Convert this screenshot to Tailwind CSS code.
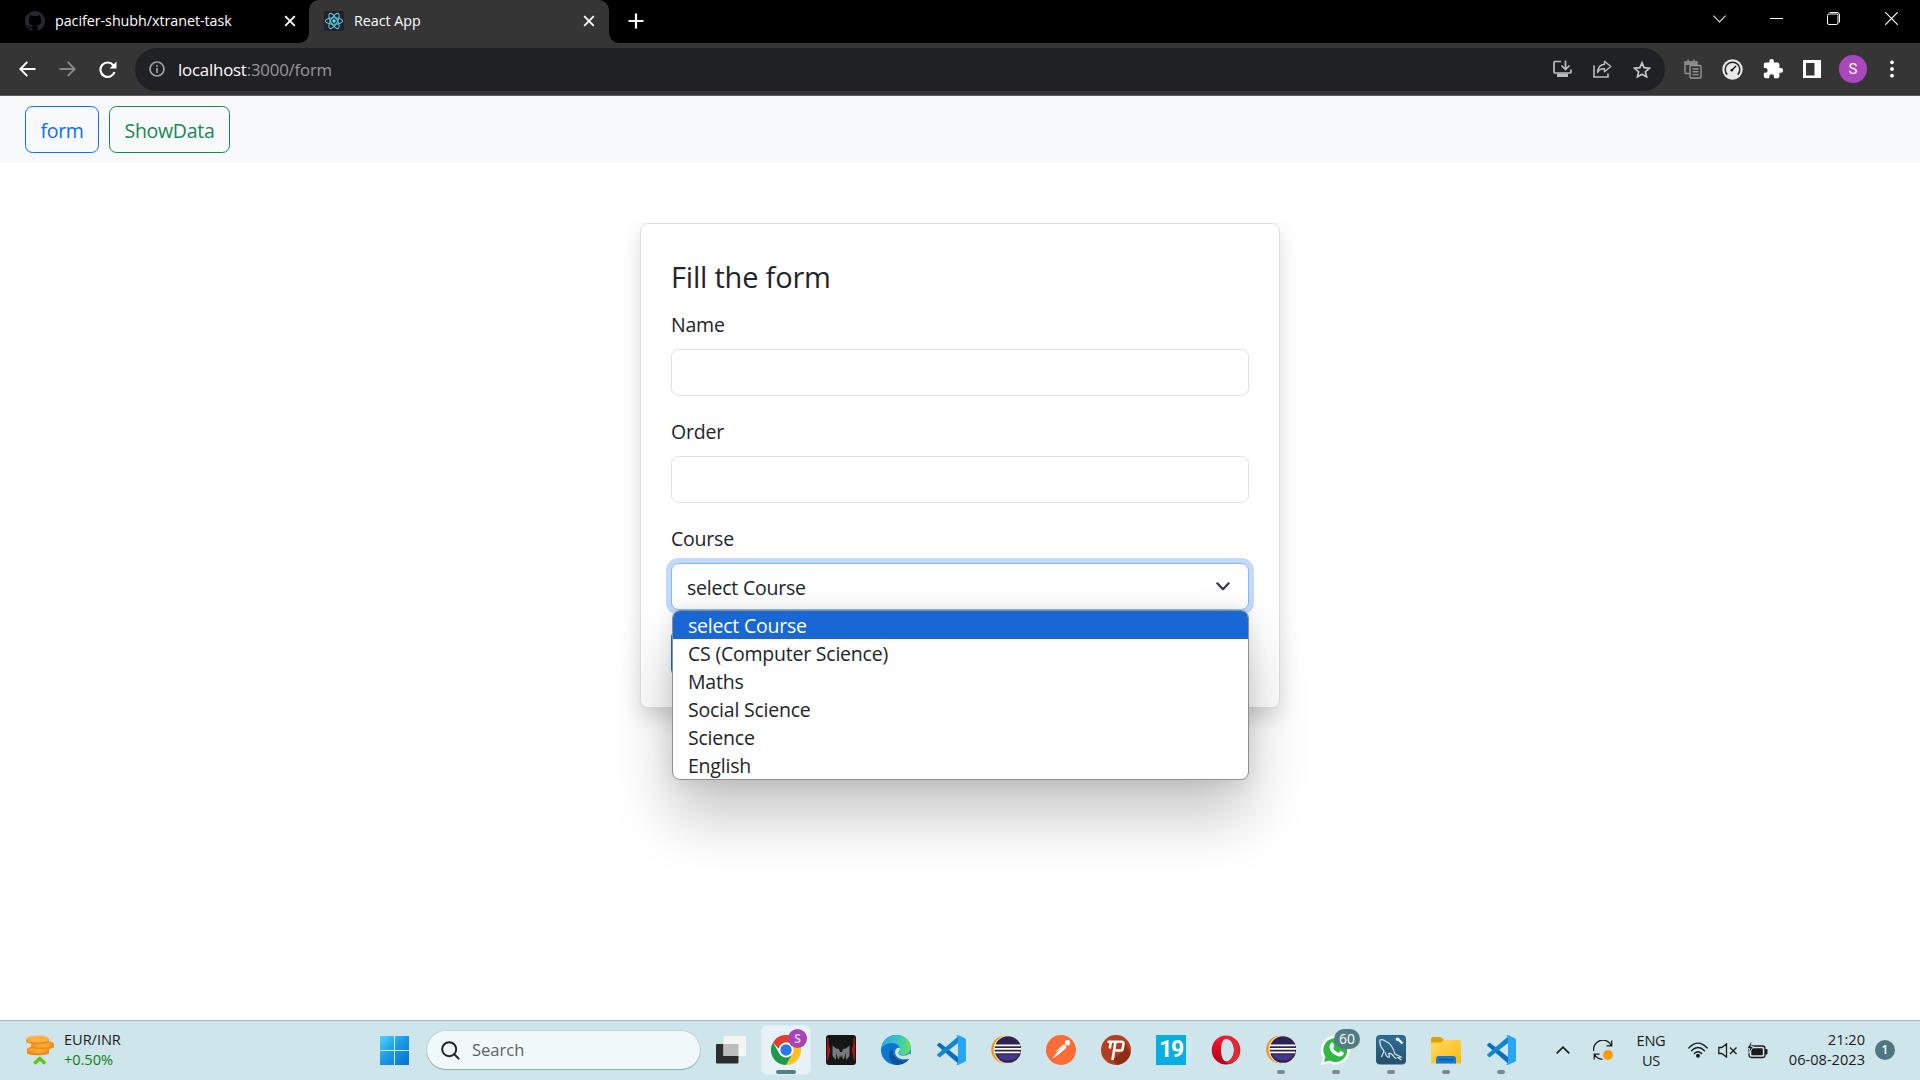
<!DOCTYPE html>
<html lang="en">
<head>
<meta charset="utf-8">
<title>React App</title>
<script src="https://cdn.jsdelivr.net/npm/@tailwindcss/browser@4"></script>
</head>
<body class="w-[1920px] h-[1080px] overflow-hidden flex flex-col bg-white font-['Open_Sans','Noto_Sans',sans-serif] text-[#212529]">

<!-- Shared app icons -->
<svg class="absolute size-0">
  <defs>
    <linearGradient id="win" x1="0" y1="0" x2="1" y2="1"><stop offset="0" stop-color="#4cd3fd"/><stop offset=".5" stop-color="#1a97e3"/><stop offset="1" stop-color="#0070d2"/></linearGradient>
    <linearGradient id="coin" x1="0" x2="1"><stop offset="0" stop-color="#f6931d"/><stop offset=".6" stop-color="#fdab3c"/><stop offset="1" stop-color="#f08c13"/></linearGradient>
    <linearGradient id="edgeTop" x1="0" y1=".5" x2="1" y2=".6"><stop offset="0" stop-color="#2fa9e0"/><stop offset=".5" stop-color="#35c4c8"/><stop offset="1" stop-color="#66e35b"/></linearGradient>
    <linearGradient id="fold" x1="0" y1="0" x2="1" y2="1"><stop offset="0" stop-color="#ffdc60"/><stop offset="1" stop-color="#fcb912"/></linearGradient>
    <linearGradient id="opera" x1="0" y1="0" x2="0" y2="1"><stop offset="0" stop-color="#ff1b2d"/><stop offset="1" stop-color="#a70014"/></linearGradient>
    <linearGradient id="sql" x1="0" y1="0" x2="0" y2="1"><stop offset="0" stop-color="#2d6f9b"/><stop offset="1" stop-color="#265069"/></linearGradient>
    <symbol id="vscode" viewBox="0 0 30 30">
      <path d="M0.8 10.2 2.6 8.2Q3.4 7.6 4.2 8.1L22 22v6.5Z" fill="#0a6fb8"/>
      <path d="M0.8 19.8 2.6 21.8Q3.4 22.4 4.2 21.9L22 8V1.5Z" fill="#0f86d4"/>
      <path d="M22 0l7 3.2q1 .5 1 1.6v20.4q0 1.100-1 1.600L22 30q-1 .2-1.600-.6l1.600-1.400V2L20.400.6Q21-.2 22 0Z" fill="#2aa5f3"/>
    </symbol>
    <symbol id="eclipse" viewBox="0 0 30 30">
      <circle cx="14" cy="14.500" r="13.800" fill="#f7941e"/>
      <circle cx="16.500" cy="14.500" r="14" fill="#f7dfb6"/>
      <circle cx="17" cy="14.500" r="13.300" fill="#2c2255"/>
      <path d="M6 19.500h22q-3 6-11 6t-11-6Z" fill="#43388a"/>
      <path d="M3.500 10.300h26M3.300 13.800h26.700M3.500 17.300h26" stroke="#fff" stroke-width="1.700"/>
    </symbol>
  </defs>
</svg>

<!-- Tab strip -->
<header class="h-[43px] shrink-0 bg-black flex text-white text-[14.300px] tracking-[-0.04px]">
  <div class="w-[309px] flex items-center pl-[25px] pr-[13px] pb-px">
    <svg class="size-5 shrink-0" viewBox="0 0 16 16" fill="#24292e"><path d="M8 0C3.580 0 0 3.580 0 8c0 3.540 2.290 6.530 5.470 7.590.4.070.550-.17.550-.38 0-.19-.010-.82-.010-1.490-2.010.37-2.530-.49-2.690-.94-.09-.23-.48-.94-.82-1.130-.28-.15-.68-.52-.010-.53.630-.010 1.080.58 1.230.82.72 1.210 1.870.87 2.330.66.070-.52.280-.87.510-1.070-1.780-.2-3.640-.89-3.640-3.950 0-.87.310-1.590.82-2.150-.08-.2-.36-1.020.08-2.120 0 0 .67-.21 2.200.82a7.400 7.400 0 0 1 4 0c1.530-1.040 2.200-.82 2.200-.82.44 1.100.16 1.920.08 2.120.51.56.82 1.270.82 2.150 0 3.070-1.870 3.750-3.650 3.950.29.25.54.73.54 1.480 0 1.070-.010 1.930-.010 2.200 0 .21.150.46.550.38A8 8 0 0 0 16 8c0-4.420-3.580-8-8-8Z"/></svg>
    <span class="ml-[10px] pb-px whitespace-nowrap">pacifer-shubh/xtranet-task</span>
    <svg class="ml-auto size-3" viewBox="0 0 12 12" stroke="#fff" stroke-width="1.900"><path d="M1.200 1.200l9.600 9.600M10.800 1.200L1.200 10.800"/></svg>
  </div>
  <div class="relative w-[300px] bg-[#353535] rounded-t-[10px] flex items-center pl-[15px] pr-[14px] pb-px">
    <svg class="absolute -left-[10px] bottom-0 size-[10px]" viewBox="0 0 10 10" fill="#353535"><path d="M10 0v10H0A10 10 0 0 0 10 0Z"/></svg>
    <svg class="absolute -right-[10px] bottom-0 size-[10px]" viewBox="0 0 10 10" fill="#353535"><path d="M0 0v10h10A10 10 0 0 1 0 0Z"/></svg>
    <svg class="size-5 shrink-0" viewBox="0 0 20 20"><rect width="20" height="20" rx="1.500" fill="#20232a"/><g fill="none" stroke="#5fc5dc" stroke-width="1.100"><ellipse cx="10" cy="10" rx="8.600" ry="3.300"/><ellipse cx="10" cy="10" rx="8.600" ry="3.300" transform="rotate(60 10 10)"/><ellipse cx="10" cy="10" rx="8.600" ry="3.300" transform="rotate(120 10 10)"/></g><circle cx="10" cy="10" r="1.700" fill="#61dafb"/></svg>
    <span class="ml-[10px] pb-px whitespace-nowrap">React App</span>
    <svg class="ml-auto size-3" viewBox="0 0 12 12" stroke="#fff" stroke-width="1.800"><path d="M1.200 1.200l9.600 9.600M10.800 1.200L1.200 10.800"/></svg>
  </div>
  <div class="flex items-center pl-[19px] pb-px">
    <svg class="size-4" viewBox="0 0 16 16" stroke="#fff" stroke-width="2.200"><path d="M8 .5v15M.5 8h15"/></svg>
  </div>
  <div class="ml-auto flex items-center pr-[22px] pb-[6px]">
    <svg class="w-[13px] h-[8px]" viewBox="0 0 13 8" fill="none" stroke="#ddd" stroke-width="1.100"><path d="M.4.600 6.500 7 12.600.600"/></svg>
    <svg class="ml-[44px] w-[13px] h-px" viewBox="0 0 13 1" fill="#fff"><path d="M0 0h13v1H0z"/></svg>
    <svg class="ml-[44px] size-[13px]" viewBox="0 0 13 13" fill="none" stroke="#fff" stroke-width="1"><rect x=".5" y="2" width="10.500" height="10.500" rx="1.500"/><path d="M2.500.500H10q2.500 0 2.500 2.500v7.500"/></svg>
    <svg class="ml-[45px] size-[13px]" viewBox="0 0 13 13" stroke="#fff" stroke-width="1.200"><path d="M.3.300l12.400 12.400M12.700.300.300 12.700"/></svg>
  </div>
</header>

<!-- Toolbar -->
<div class="h-[53px] shrink-0 bg-[#353535] border-b border-[#5c5c5c] flex items-center pl-[19px] pr-[25px]">
  <svg class="w-[17px] h-4" viewBox="0 0 17 16" fill="none" stroke="#fff" stroke-width="2"><path d="M16.500 8H1.500M8.300.900 1.300 8l7 7.100"/></svg>
  <svg class="ml-[23px] w-[17px] h-4" viewBox="0 0 17 16" fill="none" stroke="#868686" stroke-width="2"><path d="M.5 8h15M8.700.900l7 7.100-7 7.100"/></svg>
  <svg class="ml-[23px] w-[18px] h-[17px]" viewBox="0 0 18 17" fill="none" stroke="#fff" stroke-width="2.200"><path d="M14.300 4.200A7.200 7.200 0 1 0 15.500 11"/><path d="M17.500.500v7h-7Z" fill="#fff" stroke="none"/></svg>
  <div class="ml-[18px] w-[1530px] h-[43px] rounded-full bg-[#202124] flex items-center pl-[14px] pr-[14px]">
    <svg class="size-4" viewBox="0 0 16 16" fill="none" stroke="#9aa0a6" stroke-width="1.700"><circle cx="8" cy="8" r="7"/><path d="M8 7v5M8 4v1.800"/></svg>
    <p class="ml-[13px] pt-px text-[16.800px] tracking-[-0.18px] text-[#989898]"><span class="text-white">localhost</span>:3000/form</p>
    <div class="ml-auto flex items-center gap-[21px]">
      <svg class="w-[19px] h-[18px]" viewBox="0 0 19 18" fill="none" stroke="#bcbcbc" stroke-width="1.700"><path d="M8 1.500H2Q1 1.500 1 2.500v9.500q0 1 1 1h15q1 0 1-1V9.500M12.500.500v8.500M8.500 5.500l4 4 4-4"/><path d="M4 13.500h11V17H4Z" fill="#bcbcbc" stroke="none"/></svg>
      <svg class="w-[19px] h-[18px]" viewBox="0 0 19 18" fill="none" stroke="#bcbcbc" stroke-width="1.600"><path d="M1 5.500v11.500h14V13.500"/><path d="M11.500 1.300l6.300 5.200-6.300 5.200V8.800Q6.500 8.500 4.500 12.500 5 5 11.500 4.300Z" stroke-linejoin="round" stroke-width="1.400"/></svg>
      <svg class="w-[18px] h-[17px]" viewBox="0 0 18 17" fill="none" stroke="#c8c8c8" stroke-width="1.700"><path d="M9 1.800l2.100 4.900 5.300.5-4 3.500 1.200 5.200L9 13.200l-4.600 2.700 1.200-5.200-4-3.500 5.300-.5Z"/></svg>
    </div>
  </div>
  <svg class="ml-[19px] w-[18px] h-5" viewBox="0 0 18 20" fill="none" stroke="#959595" stroke-width="1.400"><path d="M5.500 14.500H2q-1 0-1-1V3h12v3"/><path d="M1 2.500h12v3.500H1Z" fill="#8a8a8a" stroke="none"/><path d="M4 .5v2M10 .5v2"/><rect x="6" y="6.500" width="11" height="12.500" rx="1" fill="#353535"/><path d="M8.500 10h6M8.500 12.800h6M8.500 15.600h6"/></svg>
  <svg class="ml-[20px] size-[21px]" viewBox="0 0 21 21"><circle cx="10.500" cy="10.500" r="10.200" fill="#e8eae8"/><path d="M5.300 15.600A7.300 7.300 0 1 1 15.700 15.600" fill="none" stroke="#222" stroke-width="1.500"/><path d="M9.500 11.500l4.500-4.500" stroke="#111" stroke-width="1.500"/><circle cx="9.800" cy="11.200" r="1.300" fill="#111"/></svg>
  <svg class="ml-[19px] size-[22px]" viewBox="0 0 24 24" fill="#fff"><path d="M20.500 11H19V7c0-1.100-.9-2-2-2h-4V3.500a2.500 2.500 0 0 0-5 0V5H4c-1.100 0-2 .9-2 2v3.800h1.500a2.700 2.700 0 0 1 0 5.400H2V20c0 1.100.9 2 2 2h3.800v-1.500a2.700 2.700 0 0 1 5.400 0V22H17c1.100 0 2-.9 2-2v-4h1.500a2.500 2.500 0 0 0 0-5Z"/></svg>
  <svg class="ml-[19px] size-[18px]" viewBox="0 0 18 18"><path fill="#fff" fill-rule="evenodd" d="M0 0h18v18H0ZM3 3v12.500h8.500V3Z"/></svg>
  <div class="ml-[18px] size-7 rounded-full bg-[#ab47bc] text-white text-[15px] flex items-center justify-center font-['Roboto',sans-serif]">S</div>
  <svg class="ml-auto w-[6px] h-[18px]" viewBox="0 0 6 18" fill="#fff"><circle cx="3" cy="2.300" r="1.900"/><circle cx="3" cy="9" r="1.900"/><circle cx="3" cy="15.700" r="1.900"/></svg>
</div>

<!-- Page -->
<nav class="h-[67px] shrink-0 bg-[#f8f9fa] flex items-start gap-[10px] pt-[10px] pl-[25px] text-[19.500px] leading-[30px] tracking-[-0.3px] font-[370]">
  <a class="w-[74px] h-[47px] flex justify-center items-center pt-[2px] border border-[#0d6efd] text-[#0d6efd] rounded-[7.500px]">form</a>
  <a class="w-[121px] h-[47px] flex justify-center items-center pt-[2px] border border-[#198754] text-[#198754] rounded-[7.500px]">ShowData</a>
</nav>

<main class="flex-1 flex justify-center items-start pt-[60px] text-[19.500px] leading-[30px] tracking-[-0.22px] font-[370]">
  <form class="w-[640px] h-[485px] px-[30px] pt-[35px] bg-white border border-[#dfdfe0] rounded-[7.500px] shadow-[0_10px_20px_rgba(0,0,0,0.15)]">
    <h4 class="h-[51px] text-[29px] leading-[36px] tracking-[-0.2px]">Fill the form</h4>
    <label class="block">Name</label>
    <input class="block mt-[9px] w-[578px] h-[47px] border border-[#dee2e6] rounded-[7.500px]">
    <label class="block mt-[21px]">Order</label>
    <input class="block mt-[9px] w-[578px] h-[47px] border border-[#dee2e6] rounded-[7.500px]">
    <label class="block mt-[21px]">Course</label>
    <div class="relative mt-[9px] w-[578px] h-[47px] flex items-center justify-between pl-[15px] pr-[18px] bg-white border border-[#86b7fe] rounded-[7.500px] shadow-[0_0_0_5px_#c3daff]">
      <span class="pt-[2px]">select Course</span>
      <svg class="w-[14px] h-[9px]" viewBox="0 0 14 9" fill="none" stroke="#343a40" stroke-width="2.200" stroke-linecap="round" stroke-linejoin="round"><path d="M1.300 1.300 7 7.300l5.700-6"/></svg>
      <ul class="absolute z-10 left-0 top-[46px] w-[577px] h-[170px] bg-white border border-[#8f8f8f] rounded-[8px] overflow-hidden leading-[28px] shadow-[0_0_20px_rgba(0,0,0,0.1),0_36px_60px_rgba(0,0,0,0.23)]">
        <li class="pl-[15px] pt-px h-[28px] bg-[#1967d2] text-white">select Course</li>
        <li class="pl-[15px] pt-px h-[28px]">CS (Computer Science)</li>
        <li class="pl-[15px] pt-px h-[28px]">Maths</li>
        <li class="pl-[15px] pt-px h-[28px]">Social Science</li>
        <li class="pl-[15px] pt-px h-[28px]">Science</li>
        <li class="pl-[15px] pt-px h-[28px]">English</li>
      </ul>
    </div>
    <button type="button" class="block mt-5 w-[92px] h-[47px] rounded-[7.500px] bg-[#0d6efd]"></button>
  </form>
</main>

<!-- Taskbar -->
<footer class="relative z-20 h-[60px] shrink-0 bg-[#cee6eb] border-t border-[#a2b2b8] flex items-center pb-px text-[14.600px] leading-5 text-[#1b1b1b]">
  <svg class="ml-[26px] w-[28px] h-[30px]" viewBox="0 0 28 30"><path d="M1 14.500v3.500c0 3 22 3 22 0v-3.500Z" fill="#ee8a15"/><ellipse cx="12" cy="14.500" rx="11.500" ry="3.500" fill="url(#coin)"/><path d="M5 9v3c0 3 23 3 23 0V9Z" fill="#f08f1c"/><ellipse cx="16.500" cy="9" rx="11.500" ry="3.500" fill="url(#coin)"/><path d="M0 4v2.500c0 3.500 23 3.500 23 0V4Z" fill="#f08f1c"/><ellipse cx="11.500" cy="4" rx="11.500" ry="3.600" fill="#fdb044"/><path d="M9.500 27.500 13.800 23.500 18 27.500" fill="none" stroke="#63c41a" stroke-width="3.600" stroke-linejoin="round" stroke-linecap="round"/></svg>
  <div class="ml-[10px] w-[70px] pb-[2px] tracking-[-0.05px]"><p>EUR/INR</p><p class="text-[#0f7b0f]">+0.50%</p></div>
  <svg class="ml-[246px] size-[29px]" viewBox="0 0 29 29"><rect width="14" height="14" rx="1" fill="#3dbdf5"/><rect x="15" width="14" height="14" rx="1" fill="#1f9ae4"/><rect y="15" width="14" height="14" rx="1" fill="#1289dc"/><rect x="15" y="15" width="14" height="14" rx="1" fill="#047bd6"/><path d="M1 0h13v14H0V1q0-1 1-1ZM15 0h13q1 0 1 1v13H15ZM0 15h14v14H1q-1 0-1-1ZM15 15h14v13q0 1-1 1H15Z" fill="url(#win)"/></svg>
  <div class="ml-[18px] w-[273px] h-[38px] rounded-full bg-[#f0f8fa] shadow-[0_1px_1px_#93a9b0,0_0_0_1px_#c0d8dd] flex items-center pl-[14px] text-[16.500px] text-[#5d6366]">
    <svg class="size-[19px]" viewBox="0 0 19 19" fill="none" stroke="#222" stroke-width="2" stroke-linecap="round"><circle cx="8.200" cy="8.200" r="7"/><path d="M13.300 13.300l4.300 4.300"/></svg>
    <span class="ml-[12px]">Search</span>
  </div>
  <svg class="ml-[16px] w-[30px] h-[28px]" viewBox="0 0 30 28"><path d="M0 9q0-1 1-1h21.500v18.500q0 1-1 1H1q-1 0-1-1Z" fill="#2d2d2b"/><path d="M7.500 0H30v20H7.500Z" fill="#f5f5f5"/><path d="M7.500 8h15v12h-15Z" fill="#bdbdbd"/></svg>

  <div class="relative ml-[16px] w-12 h-12 rounded-[5px] bg-[#e6f2f7] shadow-[0_0_0_1px_#dcecf1] flex items-center justify-center">
    <svg class="size-[30px]" viewBox="0 0 30 30"><path d="M28 7.500A15 15 0 0 1 15 30L21.500 18.800 22 11 15 7.500Z" fill="#fcc31e"/><path d="M2 7.500A15 15 0 0 1 28 7.500H15Q10 8 8 14Z" fill="#e33b2e"/><path d="M15 30A15 15 0 0 1 2 7.500L8.500 18.800Q12 23 15 22l6.500-3.200Z" fill="#209a4a"/><circle cx="15" cy="15" r="7.500" fill="#fff"/><circle cx="15" cy="15" r="5.700" fill="#2b78ee"/></svg>
    <span class="absolute left-[26px] top-[3px] size-[19px] rounded-full bg-[#a743b8] text-[#efd3f2] text-[12px] leading-[19px] text-center font-semibold">S</span>
    <span class="absolute left-[14px] bottom-0 w-5 h-1 rounded-full bg-[#557f88]"></span>
  </div>
  <div class="ml-[16px] flex items-center gap-[25px]">
    <svg class="size-[30px]" viewBox="0 0 30 30"><rect width="30" height="30" rx="3" fill="#161616"/><path d="M1 3h1.500v6l1.700 6-2 9L1 27ZM29 3h-1.500v6l-1.700 6 2 9 1.200 3Z" fill="#b0141a"/><path d="M6.500 10.500 10 13.500l3 .5 1 3h2l1-3 3-.500 3.500-3V21l-3.500 4v-7l-2 6h-1l-1-4-1 3-1-3-1 4h-1l-2-6v7L6.500 21Z" fill="#77797d"/></svg>
    <svg class="size-[30px]" viewBox="0 0 30 30"><circle cx="15" cy="15" r="15" fill="#0c77cf"/><path d="M.1 14C1.500 5 8 0 15 0c9 0 15 6 15 12.500 0 5-4 7.500-7.500 7.500-3 0-5-1-5-2s1.500-1.500 1.500-4c0-3-3-6-8-6C6.500 8 2 10.500.1 14Z" fill="url(#edgeTop)"/><path d="M12 12c-2.500 6 2 13.500 9.500 13.500 3 0 4.500-.5 7-2C25.500 28 20.500 30 15.500 30 7 28 6 18 12 12Z" fill="#0d4f9e"/><path d="M19 13c0 3-1.600 3.200-1.600 5s2.200 2.600 5.200 2.600c2.500 0 4.500-.7 6.300-2.300l.4 4.500C22 26.500 14.500 23 14 17.500c0-3 2-5.300 5-4.500Z" fill="#cee6eb"/></svg>
    <svg class="size-[30px]"><use href="#vscode"/></svg>
    <svg class="size-[30px]"><use href="#eclipse"/></svg>
    <svg class="size-[30px]" viewBox="0 0 30 30"><circle cx="15" cy="15" r="15" fill="#ff6c37"/><path d="M7.500 22.500 12 17l6-6.500 2 2-6 5.500Z" fill="#fff" stroke="#fff" stroke-width="1" stroke-linejoin="round"/><path d="M10.500 16.500l6.500-6 3 .5" stroke="#fff" fill="none" stroke-width="1.200"/><circle cx="21.500" cy="7.800" r="2.700" fill="#fff"/></svg>
    <svg class="size-[30px]" viewBox="0 0 30 30"><circle cx="15" cy="15" r="15" fill="#b53d20"/><path d="M12 25 22 16l2-9 5.300 12A15 15 0 0 1 16 30Z" fill="#8f2d14"/><path d="M6.500 6.800H20.500q2.200 0 2 2l-.7 4.700q-.3 2-2.300 2H14.500M9.800 6.800 8.800 13.500M14.500 6.800 11.500 25" fill="none" stroke="#fff" stroke-width="2.600"/></svg>
    <div class="size-[30px] bg-[#07aee2] text-white text-[23px] leading-[30px] text-center font-bold tracking-[-1.500px] font-['Roboto',sans-serif]">19</div>
    <svg class="size-[30px]" viewBox="0 0 30 30"><path fill-rule="evenodd" fill="url(#opera)" d="M15 .5A14.300 14.500 0 1 1 15 29.500 14.300 14.500 0 1 1 15 .5ZM15.500 3.500C12 3.500 10 9 10 15s2 11.500 5.500 11.500S23 21 23 15 19 3.500 15.500 3.500Z"/><path d="M12.500 4.500Q16 1 20.500 2A14.300 14.500 0 0 1 20 28.500q-4 1.200-7.500-2.500 4 1.500 7-1.500 3.500-4 3.500-9.500T19.500 5.500q-3-2.500-7-1Z" fill="#e02a35"/></svg>
    <div class="relative"><svg class="size-[30px]"><use href="#eclipse"/></svg><i class="absolute left-[11px] top-[35px] w-2 h-1 rounded-full bg-[#7b8a8e]"></i></div>
    <div class="relative"><svg class="size-[30px]" viewBox="0 0 30 30"><path d="M0 30l2-7.500A14.500 14.500 0 1 1 8 28Z" fill="#fff"/><path d="M3 27l1.500-5A12 12 0 1 1 8.500 25.600Z" fill="#2fb943"/><path d="M10 8q1.500-1 2.300.5l1 2.500q0 .8-1.300 2 1.800 3.500 5.500 5l1.600-1.800q.6-.4 3.400 1.300.6.400.200 1.500-1 2.500-4 2.500Q14 21 10 16.500 7 12 10 8Z" fill="#fff"/></svg><span class="absolute left-[13px] -top-[6px] w-[26px] h-5 rounded-full bg-[#527a83] text-white text-[14px] leading-5 text-center">60</span><i class="absolute left-[11px] top-[35px] w-2 h-1 rounded-full bg-[#7b8a8e]"></i></div>
    <div class="relative"><svg class="size-[30px]" viewBox="0 0 30 30"><rect x=".5" y=".5" width="29" height="28.500" rx="3" fill="url(#sql)" stroke="#2b5d7d"/><path d="M5.500 22 8 16Q3 10 4 5q3-1 6 1.500 6 2 9 12.500l6 3-3 .5 3.500 2.500M9 17q1 5 4 5.500 1-2-.5-4 3-1 6 4l2 1" fill="none" stroke="#d5e2ea" stroke-width="1.200"/><path d="M22 4l4.500 4.500" stroke="#fff" stroke-width="2.200"/><circle cx="21.500" cy="4.300" r="1.800" fill="#fff"/></svg><i class="absolute left-[11px] top-[35px] w-2 h-1 rounded-full bg-[#7b8a8e]"></i></div>
    <div class="relative"><svg class="size-[30px]" viewBox="0 0 30 30"><path d="M0 4q0-2 2-2h7q1 0 2 1l2 2v4H0Z" fill="#e0a006"/><path d="M0 7.500h10l3-2.500h15.500q1.500 0 1.500 1.500V28.500H0Z" fill="url(#fold)"/><path d="M5 28.500V24q0-3 3-3h14q3 0 3 3v4.500Z" fill="#1479cf"/><path d="M8 24.700h14" stroke="#0b4d8d"/></svg><i class="absolute left-[11px] top-[35px] w-2 h-1 rounded-full bg-[#7b8a8e]"></i></div>
    <div class="relative"><svg class="size-[30px]"><use href="#vscode"/></svg><i class="absolute left-[11px] top-[35px] w-2 h-1 rounded-full bg-[#7b8a8e]"></i></div>
  </div>

  <div class="ml-auto flex items-center pr-[25px]">
    <svg class="w-[14px] h-2" viewBox="0 0 14 8" fill="none" stroke="#1b1b1b" stroke-width="1.700"><path d="M.7 7.300 7 1.200l6.300 6.100"/></svg>
    <svg class="ml-[23px] w-5 h-5" viewBox="0 0 20 20" fill="none" stroke="#1b1b1b" stroke-width="1.300"><path d="M.7 11A9.300 9.300 0 0 1 18.300 5.500M18.700.500v5.300h-5.200M1.200 19.500v-5.300h5.300M1.500 14.500Q4 19 9.500 19.300"/><circle cx="15" cy="15" r="5" fill="#ff9a0a" stroke="none"/></svg>
    <div class="ml-[20px] w-[36px] text-center tracking-[-0.3px]"><p>ENG</p><p>US</p></div>
    <svg class="ml-[19px] w-5 h-4" viewBox="0 0 20 16" fill="none" stroke="#1b1b1b" stroke-width="1.300" stroke-linecap="round"><path d="M.8 6Q10-3.800 19.200 6M3.500 8.800q6.500-6.600 13 0M6.300 11.500q3.700-3.600 7.400 0"/><circle cx="10" cy="13.800" r="1.300" fill="#1b1b1b"/></svg>
    <svg class="ml-[10px] w-[20px] h-[15px]" viewBox="0 0 20 15" fill="none" stroke="#1b1b1b" stroke-width="1.300"><path d="M.8 4.500h3L8.500.900v13.200L3.800 10.500h-3ZM12 4.500l6.500 6.500M18.500 4.500 12 11"/></svg>
    <svg class="ml-[9px] w-[21px] h-[17px]" viewBox="0 0 21 17"><rect x="2" y="4" width="16" height="11.500" rx="2.500" fill="none" stroke="#1b1b1b" stroke-width="1.300"/><rect x="4.300" y="6.300" width="11.500" height="7" rx="1" fill="#1b1b1b"/><path d="M18.500 7.500h1.500v4.500h-1.500Z" fill="#1b1b1b" stroke="#1b1b1b"/><path d="M4-.2 0 6.500h2.700L1.700 11.500 6.500 4.500H3.800L5 -.2Z" fill="#1b1b1b" stroke="#cee6eb" stroke-width=".8"/></svg>
    <div class="ml-[17px] w-[80px] pb-[3px] text-right"><p>21:20</p><p>06-08-2023</p></div>
    <span class="ml-[10px] size-5 rounded-full bg-[#4f7780] text-white text-[12px] leading-5 text-center font-semibold">1</span>
  </div>
</footer>
</body>
</html>
